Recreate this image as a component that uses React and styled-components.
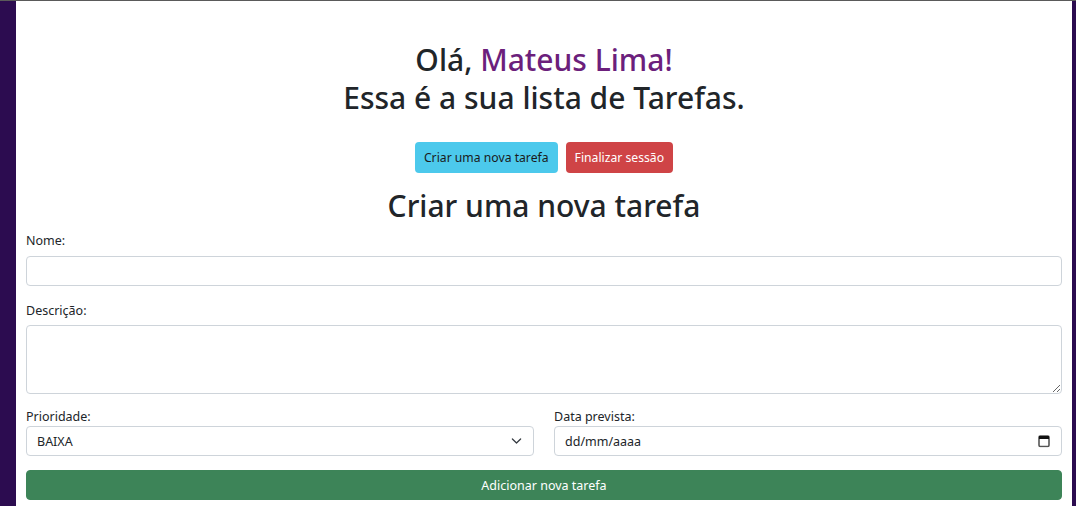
import React from "react";
import styled, { createGlobalStyle } from "styled-components";

const Global = createGlobalStyle`
  html, body { margin: 0; padding: 0; }
  body {
    background: #2c0c50;
    font-family: "Noto Sans", "Open Sans", sans-serif;
    color: #212529;
    border-top: 1px solid #5a5a5a;
  }
  * { box-sizing: border-box; }
`;

const Panel = styled.main`
  margin: 0 4px 0 16px;
  min-height: calc(100vh - 1px);
  background: #ffffff;
  padding: 40px 10px 20px;
`;

const Greeting = styled.h2`
  margin: 0;
  text-align: center;
  font-size: 30px;
  font-weight: 500;
  line-height: 38px;
`;

const Name = styled.span`
  color: #6c1f7c;
`;

const Actions = styled.div`
  display: flex;
  justify-content: center;
  gap: 8px;
  margin-top: 25px;
`;

const Button = styled.button`
  font-family: inherit;
  font-size: 12.2px;
  line-height: 19px;
  padding: 5px 8px;
  height: 31px;
  border: 1px solid transparent;
  border-radius: 4px;
  background: ${(p) => p.$bg};
  color: ${(p) => p.$fg};
  cursor: pointer;
`;

const SectionTitle = styled.h2`
  margin: 13px 0 0;
  text-align: center;
  font-size: 30px;
  font-weight: 500;
  line-height: 40px;
`;

const Form = styled.form`
  display: flex;
  flex-direction: column;
  margin-top: 5px;
`;

const Field = styled.div`
  display: flex;
  flex-direction: column;
  margin-bottom: ${(p) => p.$mb ?? 0}px;
`;

const Label = styled.label`
  font-size: 12.5px;
  line-height: 19px;
  margin-bottom: ${(p) => p.$mb ?? 4}px;
`;

const inputBase = `
  width: 100%;
  font-family: inherit;
  font-size: 12.5px;
  color: #212529;
  background: #fff;
  border: 1px solid #ced4da;
  border-radius: 4px;
  padding: 4px 10px;
  outline: none;
`;

const TextInput = styled.input`
  ${inputBase}
  height: 30px;
  &::placeholder { color: #212529; }
`;

const TextArea = styled.textarea`
  ${inputBase}
  height: 69px;
  display: block;
  resize: vertical;
`;

const Row = styled.div`
  display: grid;
  grid-template-columns: 1fr 1fr;
  column-gap: 20px;
  margin-bottom: 14px;
`;

const ControlWrap = styled.div`
  position: relative;
`;

const Select = styled.select`
  ${inputBase}
  height: 30px;
  appearance: none;
  -webkit-appearance: none;
`;

const IconSlot = styled.span`
  position: absolute;
  right: ${(p) => p.$right}px;
  top: 50%;
  transform: translateY(-50%);
  display: flex;
  pointer-events: none;
`;

const Submit = styled.button`
  width: 100%;
  height: 30px;
  font-family: inherit;
  font-size: 12.5px;
  color: #fff;
  background: #3d8458;
  border: 1px solid #3d8458;
  border-radius: 4px;
  cursor: pointer;
`;

export default function App() {
  return (
    <>
      <Global />
      <Panel>
        <Greeting>
          Olá, <Name>Mateus Lima!</Name>
          <br />
          Essa é a sua lista de Tarefas.
        </Greeting>
        <Actions>
          <Button type="button" $bg="#4cc9ec" $fg="#1a1a1a">Criar uma nova tarefa</Button>
          <Button type="button" $bg="#cf4446" $fg="#ffffff">Finalizar sessão</Button>
        </Actions>
        <SectionTitle>Criar uma nova tarefa</SectionTitle>
        <Form onSubmit={(e) => e.preventDefault()}>
          <Field $mb={15}>
            <Label htmlFor="nome" $mb={6}>Nome:</Label>
            <TextInput id="nome" type="text" />
          </Field>
          <Field $mb={13}>
            <Label htmlFor="desc" $mb={5}>Descrição:</Label>
            <TextArea id="desc" />
          </Field>
          <Row>
            <Field>
              <Label htmlFor="prio" $mb={0}>Prioridade:</Label>
              <ControlWrap>
                <Select id="prio" defaultValue="BAIXA">
                  <option value="BAIXA">BAIXA</option>
                  <option value="MEDIA">MÉDIA</option>
                  <option value="ALTA">ALTA</option>
                </Select>
                <IconSlot $right={12}>
                  <svg width="11" height="11" viewBox="0 0 16 16" fill="none" stroke="#343a40" strokeWidth="1.8" strokeLinecap="round" strokeLinejoin="round">
                    <path d="m2 5 6 6 6-6" />
                  </svg>
                </IconSlot>
              </ControlWrap>
            </Field>
            <Field>
              <Label htmlFor="data" $mb={0}>Data prevista:</Label>
              <ControlWrap>
                <TextInput id="data" type="text" placeholder="dd/mm/aaaa" />
                <IconSlot $right={12}>
                  <svg width="12" height="13" viewBox="0 0 12 13">
                    <rect x="1" y="1.5" width="10" height="10.5" rx="1.2" fill="none" stroke="#555" strokeWidth="1.6" />
                    <rect x="1" y="1.5" width="10" height="3" fill="#111" />
                  </svg>
                </IconSlot>
              </ControlWrap>
            </Field>
          </Row>
          <Submit type="submit">Adicionar nova tarefa</Submit>
        </Form>
      </Panel>
    </>
  );
}
